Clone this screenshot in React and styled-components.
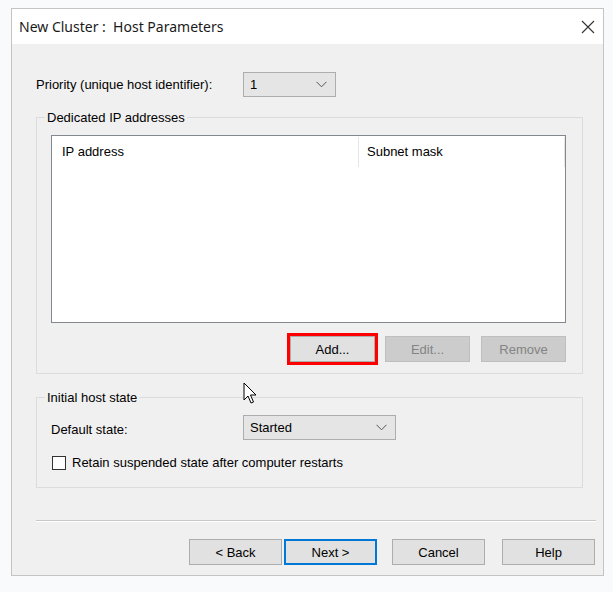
import React from "react";
import styled, { createGlobalStyle } from "styled-components";

const Global = createGlobalStyle`
  html, body { margin: 0; padding: 0; background: #f8f9fa; }
  body { width: 613px; height: 592px; overflow: hidden; font-family: "Liberation Sans", Arial, sans-serif; }
  #root { position: relative; width: 613px; height: 592px; }
`;

const Page = styled.div`
  position: relative;
  width: 613px;
  height: 592px;
  padding: 8px 9px 16px 11px;
  box-sizing: border-box;
  background: #f9fafb;
`;

const Window = styled.div`
  display: flex;
  flex-direction: column;
  height: 568px;
  border: 1px solid #c4c4c4;
  background: #f0f0f0;
  box-sizing: border-box;
`;

const TitleBar = styled.div`
  display: flex;
  align-items: center;
  justify-content: space-between;
  height: 35px;
  background: #ffffff;
  padding: 0 8px 0 7px;
`;

const Title = styled.span`
  font-family: "Noto Sans", "Open Sans", sans-serif;
  font-size: 14px;
  color: #1a1a1a;
  white-space: pre;
`;

const Close = styled.svg`
  width: 14px;
  height: 14px;
`;

const Body = styled.div`
  flex: 1;
  display: flex;
  flex-direction: column;
  padding: 28px 6px 0 24px;
  font-size: 13px;
  color: #000;
`;

const Row = styled.div`
  display: flex;
  align-items: center;
  margin-top: ${(p) => p.$mt || 0}px;
`;

const Label = styled.span`
  width: ${(p) => p.$w}px;
  flex: none;
  padding-top: ${(p) => p.$pt || 0}px;
`;

const Combo = styled.div`
  display: flex;
  align-items: center;
  justify-content: space-between;
  width: ${(p) => p.$w}px;
  height: 25px;
  box-sizing: border-box;
  border: 1px solid #adadad;
  background: #e5e5e5;
  padding: 0 8px 0 6px;
`;

const Chevron = () => (
  <svg width="11" height="7" viewBox="0 0 11 7">
    <path d="M0.5 0.8 L5.5 5.8 L10.5 0.8" fill="none" stroke="#555" strokeWidth="1" />
  </svg>
);

const Group = styled.fieldset`
  margin: ${(p) => p.$mt}px 0 0 0;
  width: 547px;
  box-sizing: border-box;
  border: 1px solid #dcdcdc;
  padding: 0 16px ${(p) => p.$pb}px 14px;
  display: flex;
  flex-direction: column;
`;

const Legend = styled.legend`
  margin-left: -6px;
  padding: 0 2px;
  line-height: 15px;
  font-size: 13px;
`;

const ListView = styled.div`
  margin-top: 10px;
  height: 188px;
  border: 1px solid #828790;
  background: #fff;
  box-sizing: border-box;
`;

const Header = styled.div`
  display: flex;
  height: 30px;
  padding-top: 1px;
`;

const HeadCell = styled.div`
  width: ${(p) => p.$w}px;
  padding-left: ${(p) => p.$pl}px;
  padding-top: 7px;
  box-sizing: border-box;
  border-right: 1px solid #e5e5e5;
`;

const ButtonRow = styled.div`
  display: flex;
  justify-content: flex-end;
  gap: ${(p) => p.$gap}px;
  margin-top: ${(p) => p.$mt}px;
`;

const Btn = styled.button`
  width: ${(p) => p.$w || 85}px;
  height: 26px;
  font-family: "Liberation Sans", Arial, sans-serif;
  font-size: 13px;
  padding: 0;
  margin-left: ${(p) => p.$ml || 0}px;
  color: ${(p) => (p.disabled ? "#838383" : "#000")};
  background: ${(p) => (p.disabled ? "#cccccc" : "#e1e1e1")};
  border: 1px solid ${(p) => (p.disabled ? "#bfbfbf" : "#adadad")};
  box-sizing: border-box;
  ${(p) => p.$default && "border: 2px solid #0078d7;"}
  ${(p) => p.$highlight && "outline: 3px solid #ff0000; outline-offset: 0px;"}
`;

const CheckRow = styled.label`
  display: flex;
  align-items: center;
  gap: 6px;
  margin-top: 15px;
  margin-left: 1px;
`;

const Box = styled.span`
  width: 14px;
  height: 14px;
  border: 1px solid #333;
  background: #fff;
  box-sizing: border-box;
`;

const Separator = styled.div`
  margin-top: 32px;
  width: 560px;
  height: 1px;
  background: #c8c8c8;
  border-bottom: 1px solid #fff;
`;

const Footer = styled.div`
  display: flex;
  justify-content: flex-end;
  align-items: center;
  margin-top: 17px;
  padding-right: 2px;
`;

const Cursor = styled.svg`
  position: absolute;
  left: 243px;
  top: 382px;
`;

export default function App() {
  return (
    <>
      <Global />
      <Page>
        <Window>
          <TitleBar>
            <Title>New Cluster :  Host Parameters</Title>
            <Close viewBox="0 0 14 14">
              <path d="M1 1 L13 13 M13 1 L1 13" stroke="#333" strokeWidth="1.1" />
            </Close>
          </TitleBar>
          <Body>
            <Row>
              <Label $w={207}>Priority (unique host identifier):</Label>
              <Combo $w={93}>
                <span>1</span>
                <Chevron />
              </Combo>
            </Row>
            <Group $mt={13} $pb={11}>
              <Legend>Dedicated IP addresses</Legend>
              <ListView>
                <Header>
                  <HeadCell $w={307} $pl={10}>IP address</HeadCell>
                  <HeadCell $w={206} $pl={8}>Subnet mask</HeadCell>
                </Header>
              </ListView>
              <ButtonRow $gap={10} $mt={13}>
                <Btn $highlight>Add...</Btn>
                <Btn disabled>Edit...</Btn>
                <Btn disabled $ml={1}>Remove</Btn>
              </ButtonRow>
            </Group>
            <Group $mt={16} $pb={17}>
              <Legend>Initial host state</Legend>
              <Row $mt={10}>
                <Label $w={192} $pt={4}>Default state:</Label>
                <Combo $w={153}>
                  <span>Started</span>
                  <Chevron />
                </Combo>
              </Row>
              <CheckRow>
                <Box />
                <span>Retain suspended state after computer restarts</span>
              </CheckRow>
            </Group>
            <Separator />
            <Footer>
              <Btn $w={93}>&lt; Back</Btn>
              <Btn $w={93} $default $ml={2}>Next &gt;</Btn>
              <Btn $w={93} $ml={15}>Cancel</Btn>
              <Btn $w={93} $ml={17}>Help</Btn>
            </Footer>
          </Body>
        </Window>
        <Cursor width="16" height="24" viewBox="0 0 16 24">
          <path d="M1 1 L1 18 L5 14 L8 21 L10.5 20 L7.5 13 L13 13 Z" fill="#fff" stroke="#000" strokeWidth="1" strokeLinejoin="miter" />
        </Cursor>
      </Page>
    </>
  );
}
